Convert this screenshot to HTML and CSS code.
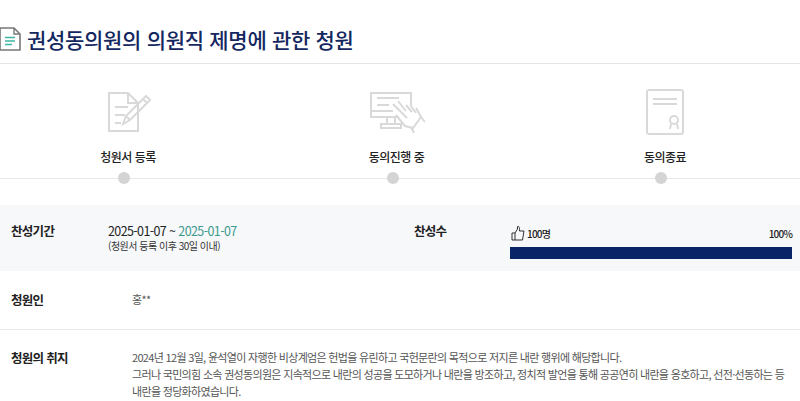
FILE: index.html
```html
<!DOCTYPE html>
<html lang="ko">

<head>
    <meta charset="UTF-8">
    <meta name="viewport" content="width=device-width, initial-scale=1.0">
    <title>권성동의원의 의원직 제명에 관한 청원</title>
    <link rel="stylesheet" href="styles.css">
</head>

<body>
    <header class="title-bar">
        <svg class="title-icon" width="21" height="24" viewBox="0 0 21 24">
            <path d="M0 1H14L20 7V23H0Z" fill="#fff" stroke="#777" stroke-width="1.6" />
            <path d="M14 1V7H20" fill="none" stroke="#777" stroke-width="1.4" />
            <path d="M5 10.500H15M5 14H15M5 17.500H12" stroke="#3fb5a3" stroke-width="1.500" />
        </svg>
        <h1>권성동의원의 의원직 제명에 관한 청원</h1>
    </header>

    <ul class="steps">
        <li class="step">
            <div class="step-icon">
                <svg width="46" height="42" viewBox="-2 0 46 42">
                    <path d="M2 2H21L31 12V40H2ZM21 2V12H31" />
                    <path d="M8 16H21M8 24H18M8 32H14" />
                    <path d="M16 33L19 25L39 5L43 9L23 29ZM36 8L40 12M19 25L23 29" />
                </svg>
            </div>
            <span class="step-label">청원서 등록</span>
            <span class="step-dot"></span>
        </li>
        <li class="step">
            <div class="step-icon">
                <svg width="56" height="42" viewBox="0 0 56 42">
                    <path d="M30 26H2V2H42V15M2 20H24M8 7H30M8 14H20M18 27V32M26 27V32M12 33H32V37H12Z" />
                    <path d="M24 13L38 27M29 10L37 20M37 14L43 21M42 15L47 22M47 17L52 26L44 37L36 35L27 24" />
                    <path d="M52 26L56 31M42 36L45 42" />
                </svg>
            </div>
            <span class="step-label">동의진행 중</span>
            <span class="step-dot"></span>
        </li>
        <li class="step">
            <div class="step-icon">
                <svg width="38" height="46" viewBox="0 0 38 46">
                    <rect x="1" y="1" width="36" height="44" rx="2" />
                    <path d="M7 10H31M7 15H31" />
                    <circle cx="28" cy="31" r="4" />
                    <path d="M25 35L24 40M31 35L32 40" />
                </svg>
            </div>
            <span class="step-label">동의종료</span>
            <span class="step-dot"></span>
        </li>
    </ul>

    <section class="summary">
        <div class="summary-term">
            <strong class="row-label">찬성기간</strong>
            <div class="term-text">
                <p class="term-date">2025-01-07 ~ <span class="term-end">2025-01-07</span></p>
                <p class="term-note">(청원서 등록 이후 30일 이내)</p>
            </div>
        </div>
        <div class="summary-count">
            <strong class="row-label">찬성수</strong>
            <div class="count-box">
                <div class="count-head">
                    <span class="count-num">
                        <svg width="14" height="16" viewBox="0 0 14 16">
                            <path d="M1 8H4V15H1ZM4 8L6.500 4V1.500C8 1 8.800 2.500 8.500 6H13L11.500 15H4" fill="none" stroke="#333" stroke-width="1" />
                        </svg>
                        100명
                    </span>
                    <span class="count-rate">100%</span>
                </div>
                <div class="count-bar"><div class="count-fill" style="width: 100%"></div></div>
            </div>
        </div>
    </section>

    <section class="info-row">
        <strong class="row-label">청원인</strong>
        <p class="info-text">홍**</p>
    </section>

    <section class="info-row info-last">
        <strong class="row-label">청원의 취지</strong>
        <p class="info-text">
            2024년 12월 3일, 윤석열이 자행한 비상계엄은 헌법을 유린하고 국헌문란의 목적으로 저지른 내란 행위에 해당합니다.<br>
            그러나 국민의힘 소속 권성동의원은 지속적으로 내란의 성공을 도모하거나 내란을 방조하고, 정치적 발언을 통해 공공연히 내란을 옹호하고, 선전·선동하는 등<br>
            내란을 정당화하였습니다.
        </p>
    </section>
</body>

</html>
```

FILE: styles.css
```css
* {
    box-sizing: border-box;
}

body {
    font-family: "Noto Sans CJK KR", "Noto Sans", sans-serif;
    background-color: #fff;
    color: #333;
    margin: 0;
    overflow: hidden;
}

p,
h1,
ul {
    margin: 0;
    padding: 0;
}

.title-bar {
    display: flex;
    align-items: center;
    gap: 6px;
    height: 64px;
    padding-top: 15px;
    border-bottom: 1px solid #e4e4e4;
}

.title-icon {
    flex: none;
}

h1 {
    font-size: 21px;
    font-weight: 500;
    line-height: 30px;
    color: #14275f;
    letter-spacing: -0.3px;
}

.steps {
    display: flex;
    justify-content: space-between;
    height: 115px;
    padding: 0 83px 0 76px;
    list-style: none;
    border-bottom: 1px solid #e8e8e8;
}

.step {
    display: flex;
    flex-direction: column;
    align-items: center;
    justify-content: flex-end;
    width: 104px;
}

.step-icon {
    display: flex;
    align-items: center;
    height: 46px;
}

.step-icon svg {
    fill: none;
    stroke: #d9d9d9;
    stroke-width: 2;
}

.step-label {
    margin-top: 13px;
    font-size: 12px;
    font-weight: 500;
    line-height: 18px;
    letter-spacing: -0.5px;
    color: #222;
}

.step-dot {
    width: 12px;
    height: 12px;
    margin: 6px 8px -6px 0;
    border-radius: 50%;
    background-color: #d4d4d4;
}

.summary {
    display: flex;
    height: 66px;
    margin-top: 26px;
    background-color: #f7f8fa;
}

.row-label {
    font-size: 12.500px;
    font-weight: 700;
    line-height: 20px;
    letter-spacing: -0.7px;
    color: #222;
}

.summary-term {
    display: grid;
    grid-template-columns: 97px 1fr;
    width: 414px;
    padding: 16px 0 0 11px;
}

.term-text {
    padding-top: 1px;
}

.term-date {
    font-size: 12.500px;
    line-height: 18px;
    letter-spacing: -0.6px;
    color: #222;
}

.term-end {
    color: #3b9a8c;
}

.term-note {
    font-size: 10px;
    line-height: 12px;
    letter-spacing: -0.5px;
    color: #333;
}

.summary-count {
    display: grid;
    grid-template-columns: 96px 282px;
    padding-top: 16px;
}

.count-box {
    padding-top: 3px;
}

.count-head {
    display: flex;
    justify-content: space-between;
    align-items: center;
    font-size: 10px;
    font-weight: 500;
    letter-spacing: -0.8px;
    color: #222;
    height: 18px;
}

.count-num {
    display: flex;
    align-items: center;
    gap: 2px;
    padding-left: 1px;
}

.count-bar {
    height: 12px;
    margin-top: 5px;
    background-color: #e6e6e6;
}

.count-fill {
    height: 100%;
    background-color: #0a2468;
}

.info-row {
    display: grid;
    grid-template-columns: 121px 1fr;
    height: 59px;
    padding: 19px 0 0 11px;
    border-bottom: 1px solid #e9e9e9;
}

.info-last {
    height: auto;
    padding-top: 18px;
    border-bottom: none;
}

.info-text {
    padding-top: 1px;
    font-size: 11px;
    line-height: 17px;
    letter-spacing: -0.68px;
    color: #555;
}
```
